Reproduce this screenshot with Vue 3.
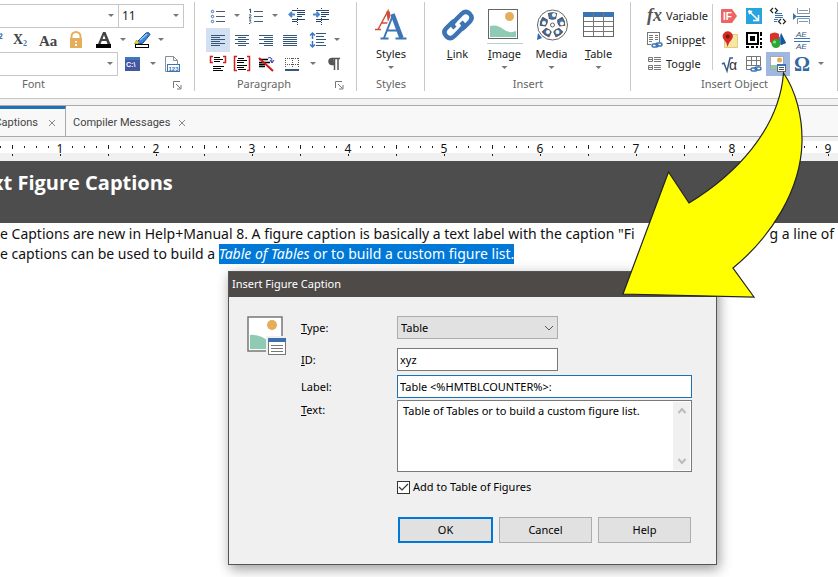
<script setup>
import { ref } from 'vue'

const fontName = ref('')
const fontSize = ref('11')
const paraStyle = ref('')
const captionType = ref('Table')
const captionId = ref('xyz')
const captionLabel = ref('Table <%HMTBLCOUNTER%>:')
const captionText = ref('Table of Tables or to build a custom figure list.')
const addToFigures = ref(true)

const ticks = Array.from({ length: 120 }, (_, i) => {
  if (i % 8 === 5) return { kind: 'number', value: (i + 3) / 8 }
  return { kind: i % 8 === 1 ? 'half' : 'minor', value: '' }
})
</script>

<template>
  <main class="app">
    <header class="ribbon">
      <section class="group group-font">
        <div class="rows">
          <div class="row end">
            <select v-model="fontName" class="combo combo-name" aria-label="Font name"><option value=""></option></select>
            <select v-model="fontSize" class="combo combo-size" aria-label="Font size"><option>11</option></select>
          </div>
          <div class="row font-tools">
            <button class="cell" aria-label="Superscript">
              <svg width="24" height="24" viewBox="0 0 24 24"><path d="M15 6.500q3-1.500 3 .5 0 1-3 3.500h3.500" fill="none" stroke="#3d75b4" stroke-width="1.200"/></svg>
            </button>
            <button class="cell" aria-label="Subscript">
              <svg width="24" height="24" viewBox="0 0 24 24"><text x="5" y="16" class="glyph-x">X</text><text x="15" y="18" class="glyph-s">2</text></svg>
            </button>
            <button class="cell gap" aria-label="Change case">
              <svg width="24" height="24" viewBox="0 0 24 24"><text x="3" y="18" class="glyph-a">Aa</text></svg>
            </button>
            <button class="cell gap" aria-label="Lock">
              <svg width="24" height="24" viewBox="0 0 24 24"><path d="M7.500 12V8.500a4.500 4.500 0 0 1 9 0v3.500" fill="none" stroke="#e5ae5b" stroke-width="2"/><rect x="6" y="10" width="12" height="10" fill="#e5ae5b"/><path d="M12 13v1.500M12 16v2" stroke="#fff" stroke-width="2"/></svg>
            </button>
            <button class="cell gap" aria-label="Font color">
              <svg width="24" height="24" viewBox="0 0 24 24"><path d="M6 16 11 4h2.500l5 12h-3l-1.200-3h-4.600l-1.200 3ZM10.500 11h3L12 7Z" fill="#444" fill-rule="evenodd"/><rect x="4" y="16" width="15" height="4" fill="#000"/></svg>
            </button>
            <span class="drop"></span>
            <button class="cell" aria-label="Highlight">
              <svg width="24" height="24" viewBox="0 0 24 24"><path d="m9 12 7-7q3-1.500 4 1.500l-7 8.500-4 1-2-2Z" fill="#3d86dc" stroke="#174a88"/><path d="m10 12 7-6" stroke="#8ccaff" stroke-width="1.500"/><path d="m4.500 16 2-4 3 3Z" fill="#f0dc20" stroke="#887700" stroke-width=".5"/><rect x="5.500" y="16.500" width="13" height="3" fill="#fff" stroke="#000"/></svg>
            </button>
            <span class="drop"></span>
          </div>
          <div class="row style-tools">
            <select v-model="paraStyle" class="combo combo-style" aria-label="Style"><option value=""></option></select>
            <button class="cell gap" aria-label="Code">
              <svg width="24" height="24" viewBox="0 0 24 24"><rect x="3.500" y="5.500" width="14" height="13" fill="#4656a3" stroke="#3a6098"/><path d="M3 5h15v3H3z" fill="#3a79bd"/><text x="4" y="15" class="glyph-code">C:\</text></svg>
            </button>
            <span class="drop"></span>
            <button class="cell" aria-label="Text variables">
              <svg width="24" height="24" viewBox="0 0 24 24"><path d="M5.500 19.500v-15h8l4 4v11Z" fill="#fff" stroke="#84919d"/><path d="M13.500 4.500v4h4" fill="none" stroke="#84919d"/><rect x="7.500" y="12.500" width="12" height="7" fill="#fff" stroke="#3d75b4"/><text x="8.500" y="18.500" class="glyph-num">123</text></svg>
            </button>
          </div>
        </div>
        <footer><span>Font</span>
          <button class="launcher" aria-label="Font settings"><svg width="9" height="9" viewBox="0 0 9 9"><path d="M.5 7V.5H7M3 3l4 4M8 4v4H4" fill="none" stroke="#777"/></svg></button>
        </footer>
      </section>

      <section class="group group-paragraph">
        <div class="rows">
          <div class="row">
            <button class="cell" aria-label="Bullets">
              <svg width="24" height="24" viewBox="0 0 24 24"><g fill="#fff" stroke="#3b6db0"><circle cx="6.500" cy="7.500" r="1.200"/><circle cx="6.500" cy="12.500" r="1.200"/><circle cx="6.500" cy="17.500" r="1.200"/></g><path d="M10 7.500h9m-9 5h9m-9 5h9" stroke="#4a5a70"/></svg>
            </button>
            <span class="drop"></span>
            <button class="cell" aria-label="Numbering">
              <svg width="24" height="24" viewBox="0 0 24 24"><path d="M5 6l1.500-1v4M5 11q2-1 2 .5L5 14h2.500M5 16h2l-1 1.500q2 1 0 2H5" fill="none" stroke="#35577c"/><path d="M10 7.500h9m-9 5h9m-9 5h9" stroke="#4a5a70"/></svg>
            </button>
            <span class="drop"></span>
            <button class="cell gap" aria-label="Decrease indent">
              <svg width="24" height="24" viewBox="0 0 24 24"><path d="M6 6.500h13M11 8.500h8M11 10.500h8M11 12.500h5M6 15.500h13M6 17.500h5" stroke="#24446a"/><path d="M11.500 4v17" stroke="#24446a" stroke-dasharray="1 1"/><path d="M3 10.500h6M6 8l-2.500 2.500L6 13" fill="none" stroke="#4a86cc" stroke-width="2"/></svg>
            </button>
            <button class="cell" aria-label="Increase indent">
              <svg width="24" height="24" viewBox="0 0 24 24"><path d="M6 6.500h13M11 8.500h8M11 10.500h8M11 12.500h5M6 15.500h13M6 17.500h5" stroke="#24446a"/><path d="M11.500 4v17" stroke="#24446a" stroke-dasharray="1 1"/><path d="M3 10.500h6M6.500 8 9 10.500 6.500 13" fill="none" stroke="#4a86cc" stroke-width="2"/></svg>
            </button>
          </div>
          <div class="row">
            <button class="cell active" aria-label="Align left"><svg width="24" height="24" viewBox="0 0 24 24"><path d="M5 7.500h14M5 9.500h9M5 11.500h14M5 13.500h9M5 15.500h14M5 17.500h9" stroke="#35577c"/></svg></button>
            <button class="cell" aria-label="Align center"><svg width="24" height="24" viewBox="0 0 24 24"><path d="M5 7.500h14M8 9.500h8M5 11.500h14M8 13.500h8M5 15.500h14M8 17.500h8" stroke="#35577c"/></svg></button>
            <button class="cell" aria-label="Align right"><svg width="24" height="24" viewBox="0 0 24 24"><path d="M5 7.500h14M10 9.500h9M5 11.500h14M10 13.500h9M5 15.500h14M10 17.500h9" stroke="#35577c"/></svg></button>
            <button class="cell" aria-label="Justify"><svg width="24" height="24" viewBox="0 0 24 24"><path d="M5 7.500h14M5 9.500h14M5 11.500h14M5 13.500h14M5 15.500h14M5 17.500h14" stroke="#35577c"/></svg></button>
            <button class="cell gap" aria-label="Line spacing"><svg width="24" height="24" viewBox="0 0 24 24"><path d="M10 5.500h10M10 8.500h8M10 11.500h10M10 14.500h8M10 17.500h10" stroke="#35577c"/><path d="M6.500 5v6M4 7.500 6.500 5 9 7.500M6.500 13v6M4 16.500 6.500 19 9 16.500" fill="none" stroke="#3b78c0" stroke-width="1.500"/></svg></button>
            <span class="drop"></span>
          </div>
          <div class="row">
            <button class="cell" aria-label="Keep with next"><svg width="24" height="24" viewBox="0 0 24 24"><path d="M8 5.500h6M8 7.500h9M8 9.500h6M7 14.500h11M7 16.500h8M7 18.500h10" stroke="#000"/><path d="M7 4.500H4.500v6H7M17 4.500h2.500v6H17" fill="none" stroke="#d02020" stroke-width="1.500"/></svg></button>
            <button class="cell" aria-label="Keep together"><svg width="24" height="24" viewBox="0 0 24 24"><path d="M8 6.500h6M7 8.500h10M7 10.500h7M7 13.500h10M7 15.500h7M8 17.500h8" stroke="#000"/><path d="M7 4.500H4.500v14H7M17 4.500h2.500v14H17" fill="none" stroke="#d02020" stroke-width="1.500"/></svg></button>
            <button class="cell" aria-label="No break"><svg width="24" height="24" viewBox="0 0 24 24"><path d="M5 7.500h9M5 10.500h11M5 12.500h6M5 14.500h6" stroke="#000" stroke-width="1.500"/><path d="M14 6q4-2 4 4M16 8l2 3 2-3" fill="none" stroke="#2233bb"/><path d="m5 6 14 13" stroke="#cc1818" stroke-width="2"/></svg></button>
            <button class="cell" aria-label="Borders"><svg width="24" height="24" viewBox="0 0 24 24"><path d="M7 6.500h14M7 12.500h14M7.500 6v10M14.500 6v10M20.500 6v10" fill="none" stroke="#555" stroke-dasharray="1 1"/><path d="M7 18h14" stroke="#35577c" stroke-width="2"/></svg></button>
            <span class="drop gap"></span>
            <button class="cell gap" aria-label="Show marks"><svg width="24" height="24" viewBox="0 0 24 24"><path d="M16 6.500H8a3 3 0 0 0 0 6h2V6.500M10.500 6v12M14 6v12" fill="none" stroke="#555" stroke-width="1.500"/><path d="M9 7H7.500a2.500 2.500 0 0 0 0 5H10Z" fill="#555"/></svg></button>
          </div>
        </div>
        <footer><span>Paragraph</span>
          <button class="launcher" aria-label="Paragraph settings"><svg width="9" height="9" viewBox="0 0 9 9"><path d="M.5 7V.5H7M3 3l4 4M8 4v4H4" fill="none" stroke="#777"/></svg></button>
        </footer>
      </section>

      <section class="group group-styles">
        <div class="big-row">
          <button class="big">
            <svg width="34" height="34" viewBox="0 0 34 34"><g fill="none" stroke="#cf4f3b"><path d="M4 21.500 14 3l2 18M7.500 15h7" stroke-width="1.500"/><path d="M14 3.500 15.500 13" stroke-width="3.500"/><path d="M1 21.500h6" stroke-width="1.500"/></g><path d="M6 31 19 3l13 28Z" fill="#fff"/><g fill="none" stroke="#3d75b4"><path d="m10 30 9-23M12.500 22.500h11" stroke-width="2"/><path d="m18.500 6 9 24" stroke-width="4.500"/><path d="M6.500 30.500h8M21.500 30.500h11" stroke-width="2"/></g></svg>
            <span>Styles</span><i class="drop"></i>
          </button>
        </div>
        <footer><span>Styles</span></footer>
      </section>

      <section class="group group-insert">
        <div class="big-row">
          <button class="big">
            <svg width="34" height="34" viewBox="0 0 34 34"><g fill="none" stroke="#3c74b4" stroke-width="4.500"><path d="m14 20-1.500-1.500q-2-3 1-5.500l7-7q4-4 8-.5 4 4 .5 8l-6 6q-2 2-4.500 1.500"/><path d="m20 14 1.500 1.500q2 3-1 5.500l-7 7q-4 4-8 .5-4-4-.5-8l6-6q2-2 4.500-1.500"/></g></svg>
            <span><u>L</u>ink</span>
          </button>
          <button class="big">
            <svg class="hot" width="36" height="34" viewBox="0 0 36 34"><rect x="1.500" y="1.500" width="29" height="29" fill="#fff" stroke="#666"/><circle cx="22.500" cy="8.500" r="4.500" fill="#e5ae5b"/><path d="M3 18q7-2 13 3t13 2v6H3Z" fill="#8fcbb3"/></svg>
            <span><u>I</u>mage</span><i class="drop"></i>
          </button>
          <button class="big">
            <svg width="34" height="34" viewBox="0 0 34 34"><path d="m2 32 1-7 4 5Z" fill="#2d6ab0"/><circle cx="17.500" cy="17" r="15" fill="#fff" stroke="#666"/><g fill="#3b78bc" stroke="#555" stroke-width="1.200"><path d="M13.500 5.500q4-1.500 8 0l-1 5q-3 1.500-6 0Z"/><path d="M13.500 5.500q4-1.500 8 0l-1 5q-3 1.500-6 0Z" transform="rotate(72 17.500 17)"/><path d="M13.500 5.500q4-1.500 8 0l-1 5q-3 1.500-6 0Z" transform="rotate(144 17.500 17)"/><path d="M13.500 5.500q4-1.500 8 0l-1 5q-3 1.500-6 0Z" transform="rotate(216 17.500 17)"/><path d="M13.500 5.500q4-1.500 8 0l-1 5q-3 1.500-6 0Z" transform="rotate(288 17.500 17)"/></g><g fill="#fff"><circle cx="19" cy="7" r="2"/><circle cx="27" cy="15.500" r="2"/><circle cx="22.500" cy="24" r="2"/><circle cx="13" cy="24" r="2"/><circle cx="9" cy="15" r="2"/></g><circle cx="17.500" cy="17" r="2" fill="#fff" stroke="#666"/></svg>
            <span>Media</span><i class="drop"></i>
          </button>
          <button class="big">
            <svg width="34" height="34" viewBox="0 0 34 34"><rect x="1.500" y="4.500" width="30" height="24" fill="#fff" stroke="#666"/><path d="M1 4h31v5H1z" fill="#3b74b4"/><path d="M11.500 4v24M21.500 4v24M2 13.500h29M2 18.500h29M2 23.500h29" stroke="#777"/></svg>
            <span><u>T</u>able</span><i class="drop"></i>
          </button>
        </div>
        <footer><span>Insert</span></footer>
      </section>

      <section class="group group-object">
        <div class="object-body">
          <div class="object-list">
            <button><svg width="18" height="18" viewBox="0 0 18 18"><text x="1" y="14" class="glyph-fx">fx</text></svg><span>Va<u>r</u>iable</span></button>
            <button><svg width="18" height="18" viewBox="0 0 18 18"><rect x="1.500" y="1.500" width="12" height="12" fill="#fff" stroke="#777"/><path d="M3 4.500h4M3 6.500h4M3 8.500h4M3 10.500h3M9 4.500h3M9 6.500h3M9 8.500h3" stroke="#777"/><path d="M5 11h12v6H5z" fill="#fff"/><g fill="none" stroke="#3874b5" stroke-width="1.500"><rect x="6" y="13" width="6" height="3" rx="1.500"/><rect x="10" y="12" width="6" height="3" rx="1.500"/></g></svg><span>Snipp<u>e</u>t</span></button>
            <button><svg width="18" height="18" viewBox="0 0 18 18"><path d="M2.500 2.500h4v4h-4zM2.500 10.500h4v4h-4zM3 4.500h3M3 12.500h3" fill="none" stroke="#777"/><path d="M8 2.500h7M8 4.500h7M8 6.500h7M8 10.500h7M8 12.500h7M8 14.500h7" stroke="#777"/></svg><span>To<u>g</u>gle</span></button>
          </div>
          <div class="object-grid">
            <button aria-label="Conditional text"><svg width="24" height="24" viewBox="0 0 24 24"><path d="M4 5h10l5 7-5 7H4q-1 0-1-1V6q0-1 1-1Z" fill="#ee6464"/><text x="5" y="16" class="glyph-if">IF</text></svg></button>
            <button aria-label="Anchor"><svg width="24" height="24" viewBox="0 0 24 24"><rect x="4" y="4" width="16" height="16" fill="#27a4dd"/><path d="m8 8 8 8M16.500 11v5.500H11M7 10l3-3" fill="none" stroke="#fff" stroke-width="1.500"/><circle cx="7.500" cy="7.500" r="1.500" fill="#fff"/></svg></button>
            <button aria-label="HTML code"><svg width="24" height="24" viewBox="0 0 24 24"><path d="M7 4 4.500 6.500 7 9M9 4l2.500 2.500L9 9M15 15l-2.500 2.500L15 20M17 15l2.500 2.500L17 20" fill="none" stroke="#222" stroke-width="1.200"/><path d="M9 9.500h7M9 11.500h8M9 13.500h8M8 15.500h4M8 17.500h3" stroke="#3d75b4"/></svg></button>
            <button aria-label="Page break"><svg width="24" height="24" viewBox="0 0 24 24"><path d="M7.500 4v5.500h12V4M7.500 20v-5.500h12V20M9 6.500h9M9 17.500h9" fill="none" stroke="#8797a8"/><path d="M7 12.500h13" stroke="#3d75b4"/><path d="m3 9 4 3.500L3 16Z" fill="#3d75b4"/></svg></button>
            <button aria-label="Map"><svg width="24" height="24" viewBox="0 0 24 24"><path d="M6.500 6.500h13v13h-13z" fill="#f8e7a3" stroke="#e0cb80"/><path d="M9.500 19q-1-5-4-8a5 5 0 1 1 8.500 0q-3 3-4.500 8Z" fill="#d52b20"/><circle cx="9.700" cy="8.500" r="2" fill="#731914"/></svg></button>
            <button aria-label="QR code"><svg width="24" height="24" viewBox="0 0 24 24"><path d="M5 5h11v11H5z" fill="#fff" stroke="#000" stroke-width="2"/><path d="M8 8h5v5H8zM18 4h2v4h-2zM18 10h2v2h-2zM18 14h2v3h-2zM4 18h3v2H4zM9 18h3v2H9zM14 18h2v2h-2zM18 18h2v2h-2z" fill="#000"/></svg></button>
            <button aria-label="Shapes"><svg width="24" height="24" viewBox="0 0 24 24"><path d="M4 6q5-3 9 0v8q-5 3-9 0Z" fill="#d83328"/><path d="m15 5 5 10-5 2-4-2Z" fill="#3880cf"/><path d="m15 5 5 10-5 2Z" fill="#185898"/><circle cx="10" cy="15.500" r="4.500" fill="#2ba735"/><circle cx="8.500" cy="14" r="1.500" fill="#8ae28b"/></svg></button>
            <button aria-label="Text break"><svg width="24" height="24" viewBox="0 0 24 24"><path d="M4 10.500h16M4 13.500h16" stroke="#3d75b4"/><g class="glyph-ae"><text x="6" y="9">AE</text><text x="6" y="21">AE</text></g></svg></button>
            <button aria-label="Equation"><svg width="24" height="24" viewBox="0 0 24 24"><path d="m4 12 2-1 3 8 3-13h3" fill="none" stroke="#315f96" stroke-width="1.500"/><text x="11" y="18" class="glyph-alpha">α</text></svg></button>
            <button aria-label="Linked table"><svg width="24" height="24" viewBox="0 0 24 24"><path d="M4.500 4.500h14v13h-14zM4.500 8.500h14M4.500 13.500h14M9.500 4v14M14.500 4v10" fill="none" stroke="#777"/><path d="M9 14h11v6H9z" fill="#fff"/><g fill="none" stroke="#3874b5" stroke-width="1.500"><rect x="9" y="16" width="6" height="3" rx="1.500"/><rect x="13" y="15" width="6" height="3" rx="1.500"/></g></svg></button>
            <button class="selected" aria-label="Figure caption"><svg width="24" height="24" viewBox="0 0 24 24"><rect x="4.500" y="4.500" width="13" height="13" fill="#fff" stroke="#aaa"/><circle cx="13.500" cy="8" r="2.500" fill="#e5ae5b"/><path d="M5 13h6v4H5z" fill="#8fcbb3"/><rect x="11.500" y="12.500" width="8" height="7" fill="#fff" stroke="#666"/><path d="M11 12h9v2h-9z" fill="#3b74b4"/><path d="M13 15.500h5M13 17.500h5" stroke="#555"/></svg></button>
            <button aria-label="Symbol"><svg width="24" height="24" viewBox="0 0 24 24"><text x="4" y="19" class="glyph-omega">Ω</text></svg></button>
          </div>
          <span class="drop symbol-drop"></span>
        </div>
        <footer><span>Insert Object</span></footer>
      </section>
    </header>

    <nav class="tabs">
      <a href="#captions" class="tab current">Captions
        <svg width="8" height="8" viewBox="0 0 8 8"><path d="m1 1 6 6M7 1 1 7" stroke="#888"/></svg></a>
      <a href="#compiler" class="tab">Compiler Messages
        <svg width="8" height="8" viewBox="0 0 8 8"><path d="m1 1 6 6M7 1 1 7" stroke="#888"/></svg></a>
    </nav>

    <div class="ruler">
      <div class="scale">
        <span v-for="(t, i) in ticks" :key="i" class="tick" :class="t.kind">{{ t.value }}</span>
      </div>
    </div>

    <article class="document">
      <h1>xt Figure Captions</h1>
      <div class="copy">
        <p class="split"><span>e Captions are new in Help+Manual 8. A figure caption is basically a text label with the caption "Fi</span><span>g a line of</span></p>
        <p>e captions can be used to build a <mark><em>Table of Tables</em> or to build a custom figure list.</mark></p>
      </div>
    </article>

    <form class="dialog" role="dialog" aria-labelledby="dialog-title" @submit.prevent>
      <h2 id="dialog-title">Insert Figure Caption</h2>
      <div class="dialog-body">
        <svg class="dialog-icon" width="40" height="40" viewBox="0 0 40 40"><rect x="1" y="1" width="34" height="34" fill="#fff" stroke="#777" stroke-width="1.500"/><circle cx="25" cy="9" r="5" fill="#e5ae5b"/><path d="M3 19q9-1 17 5v9H3Z" fill="#8fcbb3"/><path d="M19 20h21v20H19z" fill="#f0f0f0"/><rect x="21.500" y="22.500" width="17" height="16" fill="#fff" stroke="#777"/><path d="M21 22h18v4H21z" fill="#3b6fae"/><path d="M24 29.500h12M24 32.500h12M24 35.500h12" stroke="#777"/></svg>
        <div class="fields">
          <label for="type"><u>T</u>ype:</label>
          <select id="type" v-model="captionType" class="field short type"><option>Table</option></select>
          <label for="cap-id" class="id-label"><u>I</u>D:</label>
          <input id="cap-id" v-model="captionId" class="field short id-field" type="text">
          <label for="cap-label">Label:</label>
          <input id="cap-label" v-model="captionLabel" class="field focus" type="text">
          <label for="cap-text" class="top"><u>T</u>ext:</label>
          <div class="memo">
            <textarea id="cap-text" v-model="captionText"></textarea>
            <div class="scrollbar" aria-hidden="true">
              <svg width="10" height="8" viewBox="0 0 10 8"><path d="m1.500 6 3.500-4 3.500 4" fill="none" stroke="#bbb" stroke-width="2"/></svg>
              <svg width="10" height="8" viewBox="0 0 10 8"><path d="m1.500 2 3.500 4 3.500-4" fill="none" stroke="#bbb" stroke-width="2"/></svg>
            </div>
          </div>
          <label class="check"><input v-model="addToFigures" type="checkbox">Add to Table of Figures</label>
          <div class="actions">
            <button type="submit" class="primary">OK</button>
            <button type="button">Cancel</button>
            <button type="button">Help</button>
          </div>
        </div>
      </div>
    </form>

    <svg class="arrow" width="190" height="240" viewBox="0 0 190 240" aria-hidden="true"><path d="M169.500 8C182 26 188.500 52 188 77C187 125 157 172 119 203L140 232 9 229 54.500 107 75 138C121 110 165 65 169.500 8Z" fill="#ff0" stroke="#222" stroke-width="1.200"/></svg>
  </main>
</template>

<style>
body { background: #fff; }
</style>

<style scoped>
* { box-sizing: border-box; }
.app { position: relative; overflow: hidden; min-height: 100vh; font: 11px/16px "Noto Sans", "Open Sans", sans-serif; color: #222; }
button, select, input, textarea { font: inherit; color: inherit; margin: 0; }
button { padding: 0; border: 0; background: none; }
svg { display: block; flex: none; }
text { font-family: "Liberation Serif", serif; }

.ribbon { display: flex; margin-left: -104px; padding-bottom: 7px; border-bottom: 1px solid #c6c6c6; background: #fff; }
.group { flex: none; display: flex; flex-direction: column; padding-top: 4px; position: relative; }
.group::after { content: ""; position: absolute; right: 0; top: 2px; bottom: 0; width: 1px; background: #c8c8c8; }
.group-font { width: 299px; }
.group-paragraph { width: 162px; }
.group-styles { width: 68px; }
.group-insert { width: 206px; }
.group-object { width: 207px; }
footer { display: flex; height: 15px; margin-top: auto; align-items: center; color: #666; }
.rows, .big-row, .object-body { height: 72px; }
footer span { flex: 1; text-align: center; }
.launcher { width: 24px; height: 15px; padding: 3px 0 0 2px; }
.row { display: flex; height: 24px; align-items: center; }
.group-paragraph .row { padding-left: 11px; }
.end { padding-right: 11px; }
.font-tools { justify-content: flex-end; padding-right: 27px; }
.style-tools { justify-content: flex-end; padding-right: 11px; }
.cell { flex: none; width: 24px; height: 24px; }
.gap { margin-left: 4px; }
.active { background: #d3e0f2; }
.drop { flex: none; width: 14px; height: 4px; background: #777; clip-path: polygon(4px 0, 10px 0, 7px 3px); }

.combo { appearance: none; height: 24px; border: 1px solid #c6c6c6; border-radius: 0; padding: 0 3px; background: #fff url("data:image/svg+xml,%3Csvg xmlns='http://www.w3.org/2000/svg' width='6' height='4'%3E%3Cpath d='M0 0h6L3 3z' fill='%23777'/%3E%3C/svg%3E") no-repeat right 4px center; outline: 0; }
.combo-name { flex: 1; margin-left: 10px; }
.combo-size { width: 66px; margin-left: -1px; font-size: 12px; }
.combo-style { flex: 1; margin-left: 10px; }

.big-row { display: flex; justify-content: center; }
.big { width: 47px; display: flex; flex-direction: column; align-items: center; padding-top: 4px; }
.big span { line-height: 16px; margin-top: 4px; }
.big .drop { margin-top: 4px; }
.hot { box-shadow: 0 1px #fff, 0 2px #b9d3cb; }

.object-body { display: flex; }
.object-list { width: 82px; padding-left: 15px; display: flex; flex-direction: column; background: linear-gradient(#ccc, #ccc) no-repeat right top / 1px 66px; }
.object-list button { display: flex; align-items: center; gap: 2px; height: 24px; white-space: nowrap; }
.object-grid { display: grid; grid-template-columns: repeat(4, 24px); grid-auto-rows: 24px; padding-left: 5px; }
.selected { background: #a0b7df; }
.symbol-drop { margin-top: 58px; }

.tabs { display: flex; margin-top: 6px; height: 32px; border-top: 1px solid #aaa; border-bottom: 1px solid #aaa; background: #f8f8f8; box-shadow: 0 -6px #f3f3f3; }
.tab { display: flex; align-items: center; gap: 10px; padding: 4px 8px 0 7px; color: #444; font-family: "Noto Sans", sans-serif; text-decoration: none; white-space: nowrap; }
.tab:not(.current) { gap: 8px; font-family: Roboto, sans-serif; }
.current { width: 66px; justify-content: flex-end; padding: 1px 9px 0 0; border-top: 3px solid #1e6fb8; border-right: 1px solid #aaa; font-family: Roboto, sans-serif; }

.ruler { height: 24px; padding-top: 4px; background: linear-gradient(#f0f0f0 4px, #fff 4px, #fff 16px, #f0f0f0 16px); overflow: hidden; }
.scale { display: flex; margin-left: -6px; }
.tick { position: relative; flex: none; width: 12px; height: 16px; font-size: 12px; line-height: 15px; text-align: center; color: #111; }
.minor::before, .half::before, .tick::after { content: ""; position: absolute; left: 6px; width: 1px; background: #222; }
.minor::before { top: 5px; height: 2px; }
.half::before { top: 4px; height: 4px; }
.half::after, .number::after { top: 13px; height: 2px; }

.document h1 { margin: 0; height: 62px; padding: 10px 0 0; background: #4d4d4d; color: #fff; font-family: "Open Sans", sans-serif; font-size: 20px; line-height: 24px; text-indent: -8px; font-weight: 700; }
.copy { padding-top: 1px; font-size: 14px; line-height: 20px; color: #111; }
.copy p { margin: 0; white-space: nowrap; }
.split { display: flex; justify-content: space-between; padding-right: 4px; }
mark { display: inline-block; height: 20px; background: #0078d7; color: #fff; vertical-align: top; }

.dialog { position: absolute; left: 228px; top: 271px; width: 489px; border: 1px solid #555; background: #f0f0f0; box-shadow: 2px 4px 12px rgba(0, 0, 0, .4); color: #000; }
.dialog h2 { margin: 0; height: 25px; padding-left: 3px; background: #4d4a48; color: #fff; font-size: 11px; line-height: 24px; font-weight: 400; }
.dialog-body { display: flex; padding: 19px 24px 21px 18px; gap: 14px; }
.fields { flex: 1; display: grid; grid-template-columns: 96px 1fr; align-items: center; }
.field { appearance: none; width: 100%; height: 23px; padding: 0 2px; border: 1px solid #7a7a7a; border-radius: 0; background: #fff; outline: 0; }
.short { width: 161px; }
.type { padding: 0 3px; background: #e1e1e1 url("data:image/svg+xml,%3Csvg xmlns='http://www.w3.org/2000/svg' width='10' height='6'%3E%3Cpath d='m1 1 4 4 4-4' fill='none' stroke='%23555'/%3E%3C/svg%3E") no-repeat right 3px center; border-color: #adadad; }
.id-field, .id-label { margin: 9px 0 4px; }
.field.focus { border-color: #1a73b9; }
.top { align-self: start; padding-top: 4px; }
.memo { display: flex; height: 72px; margin-top: 2px; padding: 1px; border: 1px solid #7a7a7a; background: #fff; }
textarea { flex: 1; border: 0; padding: 1px 4px; resize: none; outline: 0; background: none; overflow: hidden; line-height: 16px; }
.scrollbar { width: 17px; display: flex; flex-direction: column; justify-content: space-between; align-items: center; padding: 5px 0; background: #f0f0f0; }
.check { grid-column: 2; display: flex; align-items: center; gap: 3px; margin-top: 7px; }
.check input { appearance: none; width: 13px; height: 13px; border: 1px solid #333; background: #fff url("data:image/svg+xml,%3Csvg xmlns='http://www.w3.org/2000/svg' width='11' height='11'%3E%3Cpath d='m1 5 3 3 6-6' fill='none' stroke='%23333' stroke-width='1.2'/%3E%3C/svg%3E") no-repeat; }
.actions { grid-column: 2; display: flex; gap: 6px; margin-top: 22px; padding: 0 1px; }
.actions button { flex: 1; height: 26px; border: 1px solid #adadad; background: #e1e1e1; }
.actions .primary { border: 2px solid #0078d7; }

.arrow { position: absolute; left: 614px; top: 65px; pointer-events: none; }

.glyph-x { font-size: 14px; font-weight: 700; fill: #444; }
.glyph-s { font-size: 8px; font-weight: 700; fill: #3d75b4; }
.glyph-a { font-size: 15px; font-weight: 700; fill: #444; }
.glyph-code { font: 700 7px "Liberation Sans", sans-serif; fill: #fff; }
.glyph-num { font: 700 6px "Liberation Sans", sans-serif; fill: #3d75b4; }
.glyph-fx { font-size: 18px; font-weight: 700; font-style: italic; fill: #555; }
.glyph-if { font: 700 10px "Liberation Sans", sans-serif; fill: #fff; }
.glyph-ae text { font: italic 8px "Liberation Sans", sans-serif; fill: #35577c; }
.glyph-alpha { font: 14px "Liberation Sans", sans-serif; fill: #333; }
.glyph-omega { font-size: 20px; font-weight: 700; fill: #3466a0; }
</style>
